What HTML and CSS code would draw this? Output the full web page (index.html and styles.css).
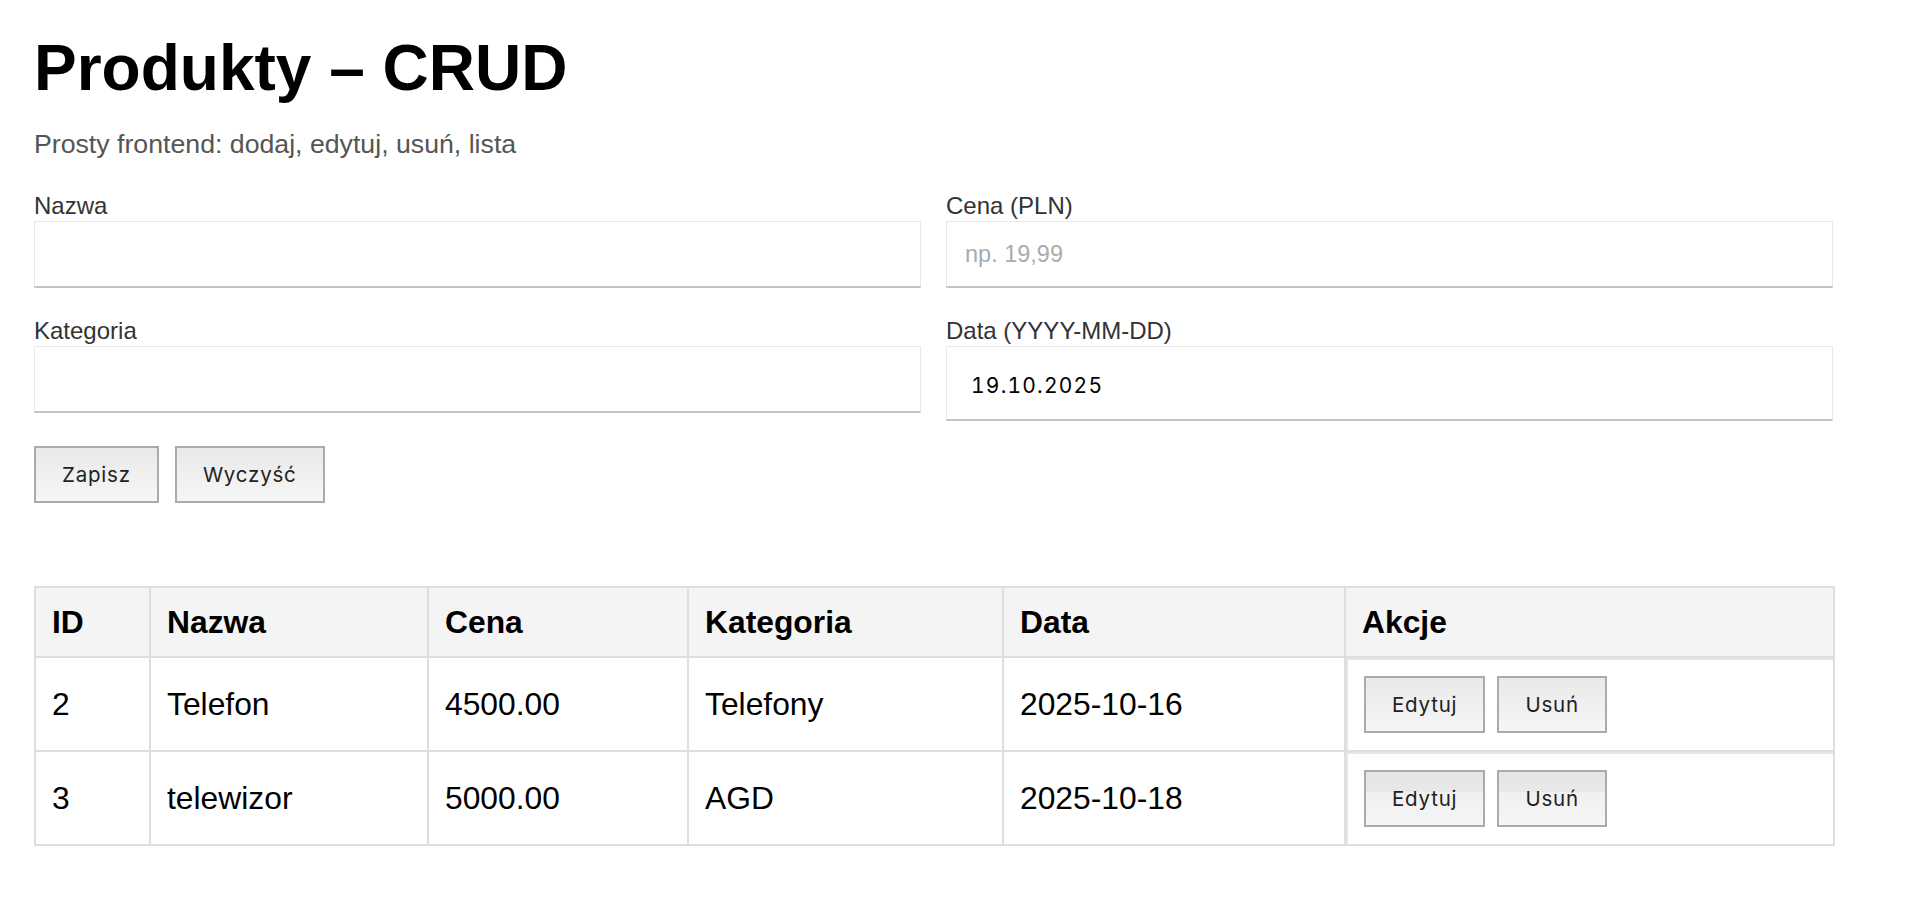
FILE: index.html
```html
<!DOCTYPE html>
<html lang="pl">
<head>
<meta charset="utf-8">
<title>Produkty – CRUD</title>
<link rel="stylesheet" href="styles.css">
</head>
<body>
<div class="page">
  <h1 class="title">Produkty – CRUD</h1>
  <p class="subtitle">Prosty frontend: dodaj, edytuj, usuń, lista</p>

  <form class="product-form">
    <div class="fields">
      <div class="field">
        <label class="field-label" for="f-name">Nazwa</label>
        <input class="field-input" id="f-name" type="text">
      </div>
      <div class="field">
        <label class="field-label" for="f-price">Cena (PLN)</label>
        <input class="field-input" id="f-price" type="text" placeholder="np. 19,99">
      </div>
      <div class="field">
        <label class="field-label" for="f-cat">Kategoria</label>
        <input class="field-input" id="f-cat" type="text">
      </div>
      <div class="field">
        <label class="field-label" for="f-date">Data (YYYY-MM-DD)</label>
        <input class="field-input field-input--date" id="f-date" type="text" value="19.10.2025">
      </div>
    </div>
    <div class="form-actions">
      <button type="button" class="btn">Zapisz</button>
      <button type="button" class="btn">Wyczyść</button>
    </div>
  </form>

  <table class="products">
    <colgroup>
      <col class="col-id">
      <col class="col-name">
      <col class="col-price">
      <col class="col-cat">
      <col class="col-date">
      <col class="col-actions">
    </colgroup>
    <thead>
      <tr>
        <th>ID</th>
        <th>Nazwa</th>
        <th>Cena</th>
        <th>Kategoria</th>
        <th>Data</th>
        <th>Akcje</th>
      </tr>
    </thead>
    <tbody>
      <tr>
        <td>2</td>
        <td>Telefon</td>
        <td>4500.00</td>
        <td>Telefony</td>
        <td>2025-10-16</td>
        <td class="actions-cell">
          <div class="actions-box">
            <button type="button" class="btn btn--row">Edytuj</button>
            <button type="button" class="btn btn--row">Usuń</button>
          </div>
        </td>
      </tr>
      <tr>
        <td>3</td>
        <td>telewizor</td>
        <td>5000.00</td>
        <td>AGD</td>
        <td>2025-10-18</td>
        <td class="actions-cell">
          <div class="actions-box">
            <button type="button" class="btn btn--row btn--split">Edytuj</button>
            <button type="button" class="btn btn--row btn--split">Usuń</button>
          </div>
        </td>
      </tr>
    </tbody>
  </table>
</div>
</body>
</html>
```

FILE: styles.css
```css
* {
  box-sizing: border-box;
}

html, body {
  margin: 0;
  padding: 0;
  background: #ffffff;
}

body {
  font-family: "Liberation Sans", Arial, Helvetica, sans-serif;
  color: #000;
}

.page {
  width: 1833px;
  padding: 31px 0 0 34px;
}

.title {
  margin: 0;
  font-size: 64px;
  font-weight: 700;
  line-height: normal;
  color: #000;
}

.subtitle {
  margin: 24px 0 0;
  font-size: 26.7px;
  line-height: 30px;
  color: #555;
}

.product-form {
  margin-top: 33px;
}

.fields {
  display: grid;
  grid-template-columns: 1fr 1fr;
  column-gap: 25px;
  row-gap: 29px;
  align-items: start;
}

.field {
  display: flex;
  flex-direction: column;
}

.field-label {
  display: block;
  font-size: 24px;
  line-height: 28px;
  color: #333;
  margin-bottom: 1px;
}

.field-input {
  display: block;
  width: 100%;
  height: 67px;
  margin: 0;
  padding: 0 18px;
  font-family: "Liberation Sans", Arial, sans-serif;
  font-size: 23.5px;
  color: #000;
  background: #fff;
  border: 1px solid #e8e8e8;
  border-bottom: 2px solid #c4c4c4;
  border-radius: 0;
  outline: none;
}

.field-input::placeholder {
  color: #ababab;
}

.field-input--date {
  height: 75px;
  padding: 4px 24px 0;
  font-family: Inter, "Liberation Sans", sans-serif;
  font-size: 21px;
  letter-spacing: 1.2px;
  font-variant-numeric: tabular-nums;
  color: #000;
}

.form-actions {
  display: flex;
  gap: 16px;
  margin-top: 25px;
}

.btn {
  height: 57px;
  margin: 0;
  padding: 0 26px;
  font-family: Inter, "Liberation Sans", sans-serif;
  font-size: 20.5px;
  letter-spacing: 0.8px;
  color: #222;
  background: linear-gradient(#e9e9e9, #f6f6f6);
  border: 2px solid #ababab;
  border-radius: 0;
  cursor: pointer;
}

.btn--split {
  background: linear-gradient(#e6e6e6 0%, #e8e8e8 37%, #f0f0f0 37%, #f5f5f5 100%);
}

.products {
  margin-top: 83px;
  width: 1799px;
  table-layout: fixed;
  border-collapse: collapse;
  font-size: 31.8px;
}

.col-id { width: 115px; }
.col-name { width: 278px; }
.col-price { width: 260px; }
.col-cat { width: 315px; }
.col-date { width: 342px; }
.col-actions { width: 489px; }

.products th,
.products td {
  padding: 16px;
  border: 2px solid #dedede;
  text-align: left;
  vertical-align: middle;
  line-height: 36px;
}

.products th {
  background: #f4f4f4;
  font-weight: 700;
}

.products td.actions-cell {
  padding: 0;
}

.actions-box {
  display: flex;
  gap: 12px;
  padding: 16px 16px 17px;
  border-top: 2px solid #e6e6e6;
  border-left: 2px solid #e6e6e6;
}
```
